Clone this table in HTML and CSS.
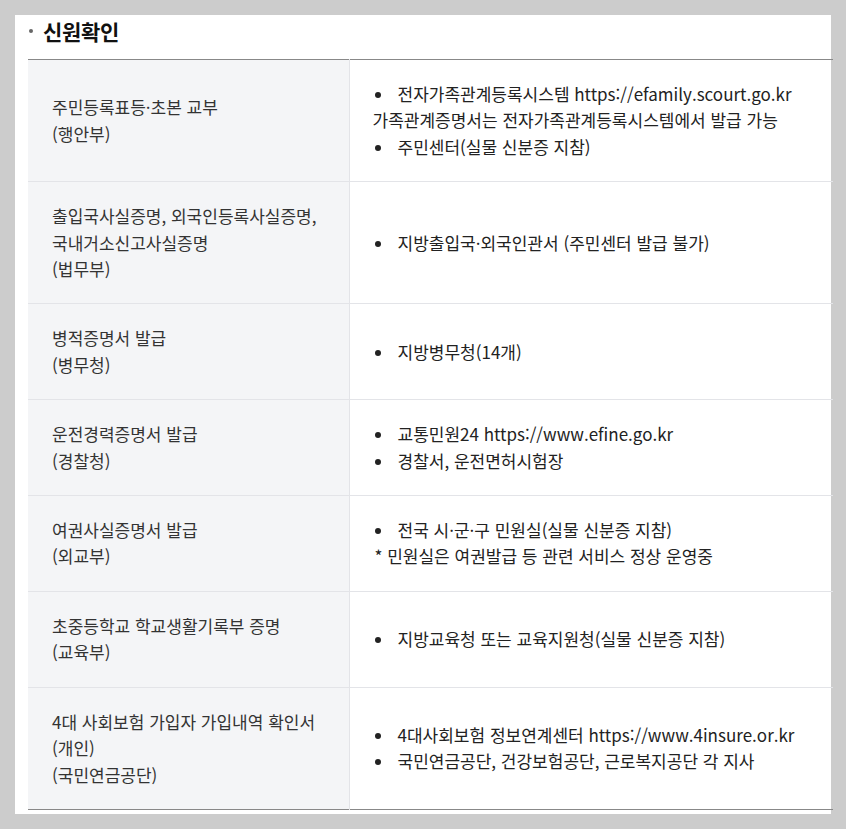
FILE: index.html
```html
<!DOCTYPE html>
<html lang="ko">
<head>
<meta charset="utf-8">
<link rel="stylesheet" href="styles.css">
</head>
<body>
<div class="panel">
  <h2 class="title"><span class="dot"></span>신원확인</h2>
  <table class="tbl">
    <colgroup><col class="c1"><col class="c2"></colgroup>
    <tr>
      <th>주민등록표등·초본 교부<br>(행안부)</th>
      <td><span class="b"></span>전자가족관계등록시스템 https://efamily.scourt.go.kr<br>가족관계증명서는 전자가족관계등록시스템에서 발급 가능<br><span class="b"></span>주민센터(실물 신분증 지참)</td>
    </tr>
    <tr>
      <th>출입국사실증명, 외국인등록사실증명,<br>국내거소신고사실증명<br>(법무부)</th>
      <td><span class="b"></span>지방출입국·외국인관서 (주민센터 발급 불가)</td>
    </tr>
    <tr>
      <th>병적증명서 발급<br>(병무청)</th>
      <td><span class="b"></span>지방병무청(14개)</td>
    </tr>
    <tr>
      <th>운전경력증명서 발급<br>(경찰청)</th>
      <td><span class="b"></span>교통민원24 https://www.efine.go.kr<br><span class="b"></span>경찰서, 운전면허시험장</td>
    </tr>
    <tr>
      <th>여권사실증명서 발급<br>(외교부)</th>
      <td><span class="b"></span>전국 시·군·구 민원실(실물 신분증 지참)<br><span class="star">* 민원실은 여권발급 등 관련 서비스 정상 운영중</span></td>
    </tr>
    <tr>
      <th>초중등학교 학교생활기록부 증명<br>(교육부)</th>
      <td><span class="b"></span>지방교육청 또는 교육지원청(실물 신분증 지참)</td>
    </tr>
    <tr>
      <th>4대 사회보험 가입자 가입내역 확인서<br>(개인)<br>(국민연금공단)</th>
      <td><span class="b"></span>4대사회보험 정보연계센터 https://www.4insure.or.kr<br><span class="b"></span>국민연금공단, 건강보험공단, 근로복지공단 각 지사</td>
    </tr>
  </table>
</div>
</body>
</html>
```

FILE: styles.css
```css
html, body {
  margin: 0;
  padding: 0;
  background: #cccccc;
}
body {
  padding: 15px;
  font-family: "Noto Sans CJK KR", "Noto Sans", sans-serif;
}
.panel {
  width: 816px;
  height: 799px;
  box-sizing: border-box;
  background: #ffffff;
  padding: 0 0 0 13px;
}
.title {
  margin: 0;
  height: 44px;
  box-sizing: border-box;
  padding-bottom: 12px;
  display: flex;
  align-items: center;
  font-size: 21px;
  font-weight: 700;
  color: #111111;
  letter-spacing: -0.3px;
}
.dot {
  display: inline-block;
  width: 4px;
  height: 4px;
  border-radius: 50%;
  background: #666666;
  margin: 0 10px 0 1px;
}
.tbl {
  width: 805px;
  border-collapse: collapse;
  border-top: 1px solid #888888;
  border-bottom: 1px solid #888888;
  font-size: 17px;
  line-height: 26.4px;
}
.c1 { width: 321px; }
.tbl th, .tbl td {
  padding: 21px 10px 21px 24px;
  border-bottom: 1px solid #e3e4e8;
  vertical-align: middle;
  text-align: left;
  font-weight: 400;
  color: #333333;
}
.tbl tr:last-child th, .tbl tr:last-child td {
  border-bottom: 0;
}
.tbl th {
  background: #f4f5f7;
  border-right: 1px solid #e3e4e8;
}
.tbl td {
  padding-left: 23px;
  color: #222222;
}
.b {
  display: inline-block;
  width: 25px;
  height: 26px;
  vertical-align: top;
  position: relative;
}
.b::before {
  content: "";
  position: absolute;
  left: 2px;
  top: 11px;
  width: 6px;
  height: 6px;
  border-radius: 50%;
  background: #222222;
}
.star {
  padding-left: 2px;
}
```
